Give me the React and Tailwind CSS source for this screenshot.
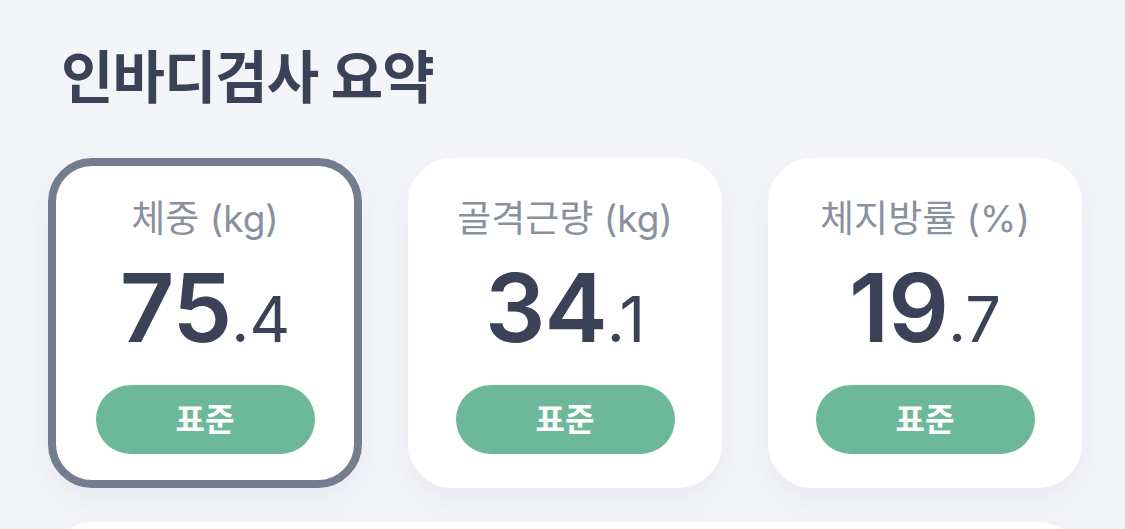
export default function App() {
  const cards = [
    { label: "체중 (kg)", int: "75", dec: ".4", active: true },
    { label: "골격근량 (kg)", int: "34", dec: ".1" },
    { label: "체지방률 (%)", int: "19", dec: ".7" },
  ];
  return (
    <div
      className="w-[1125px] h-[529px] overflow-hidden bg-[#f4f5f9] pl-[48px] pr-[43px]"
      style={{ fontFamily: 'Inter, "Noto Sans CJK KR", sans-serif' }}
    >
      <h1 className="pl-[13px] pt-[37px] text-[57px] leading-[82px] font-bold text-[#394256] tracking-[-1px]">
        인바디검사 요약
      </h1>
      <div className="mt-[39px] grid grid-cols-3 gap-[46px]">
        {cards.map((c) => (
          <div
            key={c.label}
            className={`h-[330px] rounded-[44px] border-[8px] bg-white flex flex-col items-center shadow-[0_12px_30px_rgba(40,50,80,0.06)] ${
              c.active ? "border-[#727d8f]" : "border-white"
            }`}
          >
            <div className="mt-[28px] text-[37px] leading-[50px] text-[#8a919d]">
              {c.label}
            </div>
            <div className="mt-[14px] flex items-baseline text-[#394256] leading-[100px]">
              <span className="text-[95px] font-semibold tracking-[-1px]">{c.int}</span>
              <span className="text-[63px] font-normal">{c.dec}</span>
            </div>
            <div className="mt-[16px] w-[219px] h-[69px] rounded-full bg-[#6db89b] flex items-center justify-center text-white text-[32px] font-bold">
              표준
            </div>
          </div>
        ))}
      </div>
      <div className="mt-[34px] h-[100px] rounded-[44px] bg-white shadow-[0_12px_30px_rgba(40,50,80,0.06)]" />
    </div>
  );
}
